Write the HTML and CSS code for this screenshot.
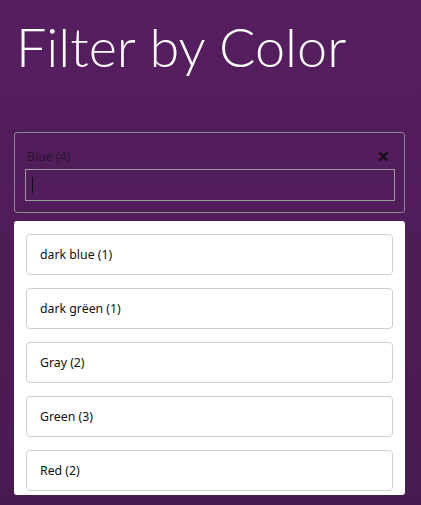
FILE: index.html
```html
<!DOCTYPE html>
<html lang="en">

<head>
    <meta charset="UTF-8">
    <title>Filter by Color</title>
    <link rel="stylesheet" href="styles.css">
</head>

<body>

    <h1 class="page-title">Filter by Color</h1>

    <div class="filter-box">
        <div class="filter-head">
            <span class="filter-label">Blue (4)</span>
            <span class="filter-clear">&#x2715;</span>
        </div>
        <div class="filter-input"><span class="caret"></span></div>
    </div>

    <div class="filter-list">
        <div class="filter-item">dark blue (1)</div>
        <div class="filter-item">dark grëen (1)</div>
        <div class="filter-item">Gray (2)</div>
        <div class="filter-item">Green (3)</div>
        <div class="filter-item">Red (2)</div>
    </div>

</body>

</html>
```

FILE: styles.css
```css
html {
    background: linear-gradient(#561e5f, #491a51);
    min-height: 100%;
}

body {
    margin: 0;
    padding: 0 16px 0 14px;
    font-family: "Noto Sans", "Open Sans", sans-serif;
    font-size: 12.3px;
}

.page-title {
    margin: 0;
    padding: 14px 0 0 2px;
    height: 132px;
    box-sizing: border-box;
    font-family: Lato, sans-serif;
    font-weight: 300;
    font-size: 54px;
    color: white;
}

.filter-box {
    border: 1px solid #8a8a8a;
    border-radius: 3px;
    padding: 12px 9px 11px 10px;
}

.filter-head {
    display: flex;
    justify-content: space-between;
    align-items: center;
    padding: 0 5px 0 2px;
    height: 22px;
    margin-bottom: 2px;
}

.filter-label {
    color: #2a1530;
}

.filter-clear {
    color: #111;
    font-size: 15px;
    font-weight: bold;
}

.filter-input {
    height: 30px;
    border: 1px solid #9a9a9a;
    display: flex;
    align-items: center;
    padding-left: 6px;
}

.caret {
    width: 1px;
    height: 16px;
    background: #111;
}

.filter-list {
    margin-top: 8px;
    background: white;
    border-radius: 3px;
    height: 274px;
    overflow: hidden;
    padding: 13px 12px 0 12px;
    box-sizing: border-box;
    display: flex;
    flex-direction: column;
    gap: 13px;
}

.filter-item {
    flex: none;
    height: 41px;
    box-sizing: border-box;
    border: 1px solid #cfcfcf;
    border-radius: 4px;
    display: flex;
    align-items: center;
    padding-left: 13px;
    color: #111;
}
```
